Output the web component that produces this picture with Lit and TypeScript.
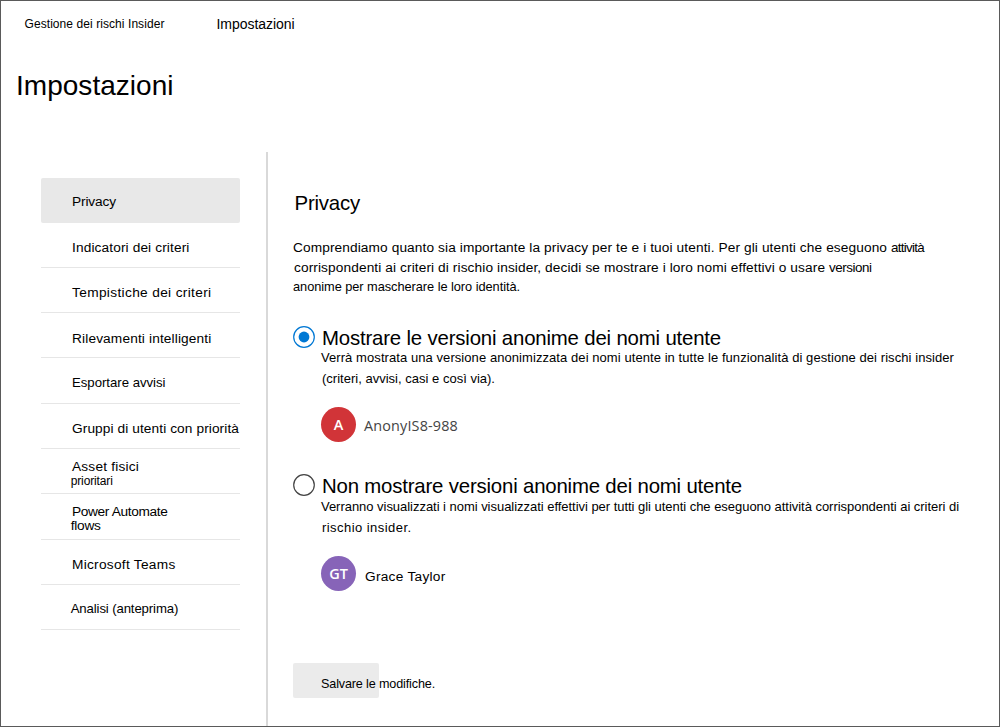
import { LitElement, html, css } from "lit";
import { customElement, property } from "lit/decorators.js";

/** One line of text whose tracking is adjusted so that it fills `width` pixels. */
@customElement("fit-line")
class FitLine extends LitElement {
  static styles = css`
    :host { display: block; white-space: pre; }
    span { display: inline-block; }
  `;
  @property({ type: Number }) width = 0;
  @property() text = "";

  updated() {
    const span = this.renderRoot.querySelector("span") as HTMLElement;
    span.style.letterSpacing = "0px";
    const natural = span.getBoundingClientRect().width;
    if (this.width) span.style.letterSpacing = `${(this.width - natural) / this.text.length}px`;
  }
  render() {
    return html`<span>${this.text}</span>`;
  }
}

const line = (text: string, width: number, cls = "") =>
  html`<fit-line class=${cls} .text=${text} .width=${width}></fit-line>`;

type Row = [text: string, width: number, cls?: string];
const NAV: { cls: string; rows: Row[] }[] = [
  { cls: "active", rows: [["Privacy", 44]] },
  { cls: "", rows: [["Indicatori dei criteri", 117.5]] },
  { cls: "", rows: [["Tempistiche dei criteri", 139.5]] },
  { cls: "low", rows: [["Rilevamenti intelligenti", 139.5]] },
  { cls: "tall", rows: [["Esportare avvisi", 93.5, "narrow"]] },
  { cls: "", rows: [["Gruppi di utenti con priorità", 167]] },
  { cls: "double", rows: [["Asset fisici", 67], ["prioritari", 42, "small second"]] },
  { cls: "double tall", rows: [["Power Automate", 95.5], ["flows", 30, "second"]] },
  { cls: "", rows: [["Microsoft Teams", 103.5]] },
  { cls: "high", rows: [["Analisi (anteprima)", 107.5, "outdent narrow"]] },
];

@customElement("app-root")
class AppRoot extends LitElement {
  static styles = css`
    :host {
      display: block;
      font: 13.7px/16px "Liberation Sans", Arial, sans-serif;
      color: #000;
    }
    .frame {
      box-sizing: border-box;
      width: 1000px;
      height: 727px;
      border: 1px solid #5a5a5a;
      background: #fff;
      display: flex;
      flex-direction: column;
      overflow: hidden;
    }
    .crumbs { display: flex; gap: 52px; padding: 15px 0 0 23.5px; }
    .crumbs .first { font-size: 12px; }
    .crumbs .last { font-size: 14px; }
    .title { font-size: 28px; line-height: 32px; margin: 38px 0 50px 15px; }
    .body { flex: 1; display: flex; min-height: 0; }
    nav { width: 199px; padding: 26px 26px 0 40px; }
    .item {
      box-sizing: border-box;
      height: 45px;
      padding: 17px 0 0 31px;
      border-bottom: 1px solid #e6e6e6;
    }
    .item.active { background: #e8e8e8; padding-top: 16px; border: 0; border-radius: 2px; }
    .item.low { padding-top: 18px; }
    .item.high { padding-top: 16px; }
    .item.tall { height: 46px; }
    .item.double { padding-top: 10px; }
    .second { margin: -2px 0 0 -1.3px; }
    .outdent { margin-left: -1.3px; }
    .small { font-size: 12px; }
    .narrow { font-size: 13.2px; }
    .rule { width: 2px; background: #d9d9d9; }
    main { flex: 1; padding: 39px 0 0 25px; }
    .h2 { font-size: 20.4px; line-height: 24px; }
    .heading { margin-left: 1px; }
    .section { margin-left: 1.5px; }
    .intro { margin-top: 25px; display: grid; row-gap: 4px; }
    .pair { display: flex; }
    .pair + .pair { margin-left: 1px; }
    .tight { font-size: 13.4px; }
    .third { font-size: 12.8px; margin-top: -1px; }
    .option { display: grid; grid-template-columns: 28px 1fr; margin-top: 31px; }
    .radio { width: 22px; height: 22px; display: block; }
    .sub { font-size: 13px; }
    .sub.b { margin: 5px 0 0 1px; }
    .two .sub.a { margin-top: 1px; }
    .person { display: flex; margin-top: 20px; height: 36px; }
    .avatar {
      width: 35px; height: 35px; border-radius: 50%;
      display: grid; place-items: center;
      color: #fff;
      font: 600 14.5px/20px "Open Sans", "Noto Sans", sans-serif;
    }
    .red { background: #d13438; }
    .purple { background: #8764b8; }
    .anon { font: 14.4px/20px "Open Sans", "Noto Sans", sans-serif; color: #444; margin: 9px 0 0 8px; }
    .grace { margin: 13px 0 0 9px; }
    .save {
      width: 58px; height: 22px; padding: 13px 0 0 28px; margin-top: 71px;
      background: #ebebeb; border-radius: 2px;
      font-size: 12.6px;
    }
  `;

  radio(checked: boolean) {
    return html`<svg class="radio" viewBox="0 0 22 22" fill="none">
      <circle cx="11" cy="11" r="10.3" stroke=${checked ? "#0078d4" : "#444"} stroke-width="1.2" />
      <circle cx="11" cy="11" r="5.4" fill=${checked ? "#0078d4" : "none"} />
    </svg>`;
  }

  render() {
    return html`<div class="frame">
      <div class="crumbs">
        ${line("Gestione dei rischi Insider", 140, "first")}
        ${line("Impostazioni", 78, "last")}
      </div>
      ${line("Impostazioni", 157.5, "title")}
      <div class="body">
        <nav>
          ${NAV.map((n) => html`<div class="item ${n.cls}">${n.rows.map(([t, w, c]) => line(t, w, c ?? ""))}</div>`)}
        </nav>
        <div class="rule"></div>
        <main>
          ${line("Privacy", 65.5, "h2 section")}
          <div class="intro">
            <div class="pair">${line("Comprendiamo quanto sia importante la privacy per te e i tuoi utenti. Per gli utenti che eseguono ", 598)}${line("attività", 33, "tight")}</div>
            <div class="pair">${line("corrispondenti ai criteri di rischio insider, decidi se mostrare i loro nomi effettivi o usare ", 535)}${line("versioni", 42.5, "tight")}</div>
            ${line("anonime per mascherare le loro identità.", 227, "third")}
          </div>
          <div class="option one">
            ${this.radio(true)}
            <div>
              ${line("Mostrare le versioni anonime dei nomi utente", 399, "h2 heading")}
              ${line("Verrà mostrata una versione anonimizzata dei nomi utente in tutte le funzionalità di gestione dei rischi insider", 633, "sub a")}
              ${line("(criteri, avvisi, casi e così via).", 173, "sub b")}
              <div class="person">
                <div class="avatar red">A</div>
                ${line("AnonyIS8-988", 94, "anon")}
              </div>
            </div>
          </div>
          <div class="option two">
            ${this.radio(false)}
            <div>
              ${line("Non mostrare versioni anonime dei nomi utente", 420, "h2 heading")}
              ${line("Verranno visualizzati i nomi visualizzati effettivi per tutti gli utenti che eseguono attività corrispondenti ai criteri di", 638, "sub a")}
              ${line("rischio insider.", 89.5, "sub b")}
              <div class="person">
                <div class="avatar purple">GT</div>
                ${line("Grace Taylor", 80.5, "grace")}
              </div>
            </div>
          </div>
          <div class="save">${line("Salvare le modifiche.", 114)}</div>
        </main>
      </div>
    </div>`;
  }
}
